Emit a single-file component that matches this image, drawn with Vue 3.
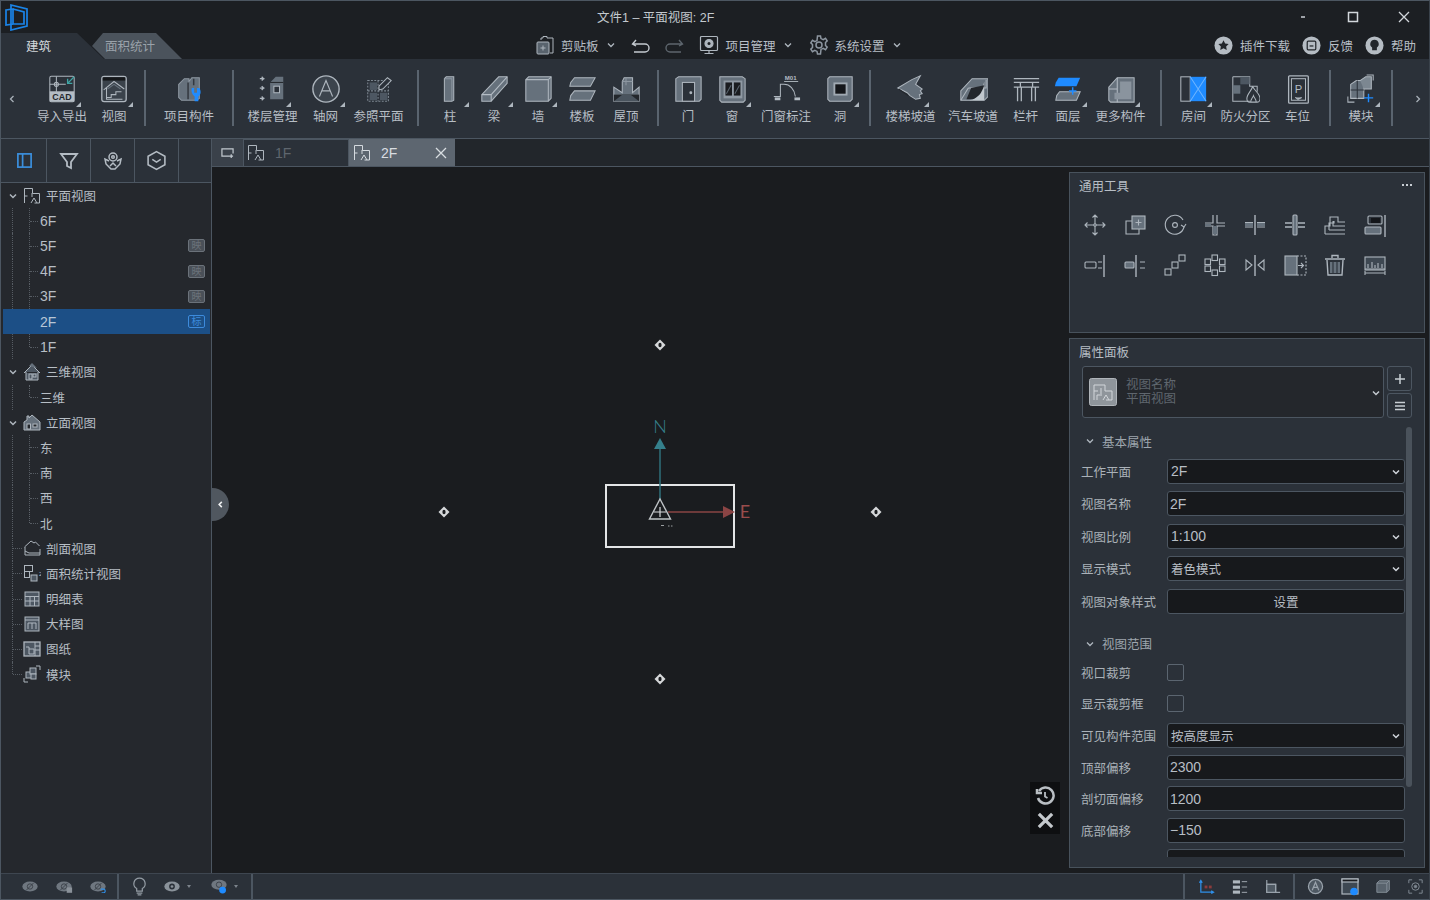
<script setup>
const T = 'font-family="Liberation Sans" stroke="none"'
const G = '#66717c'
const L = '#b4bcc4'
const B = '#1f8bff'

// ribbon icons, 32x32
const icons = {
  cad: `<rect x="3" y="2.5" width="26" height="27" rx="1.5"/><path d="M3 11h17M10 2.5V20"/><circle cx="10" cy="11" r="2.2"/><path d="M3 19h26" /><rect x="3" y="19" width="26" height="10.5" fill="${L}" stroke="none"/><text x="16" y="28" font-size="9.5" font-weight="700" fill="#23272c" text-anchor="middle" ${T}>CAD</text><path d="M29 3l-7 7M22 5v5h5" stroke="#3fa5a5" stroke-width="1.4"/>`,
  view: `<rect x="3" y="2.5" width="26" height="27" rx="2.5" stroke-width="1.4" fill="#3a424b"/><rect x="4" y="3.5" width="24" height="3.500" fill="#15171a" stroke="none"/><path d="M5 17l11-9 11 8M8 15v12h17" /><path d="M8 25h5v-3h5v-3h6" /><path d="M9 16l7-5 7 5" stroke="${G}"/>`,
  comp: `<path d="M5 11l6-6h5v3l3-4h8v22l-3 2H8l-3-3z" fill="${G}" stroke="#8d97a1"/><path d="M15 9v18M21 5v7" stroke="#33383f" stroke-width="1.600"/><path d="M19 15h2.500v5h3v-5H27c2 3 2 7-1 9v5h-4v-5c-3-2-4-6-3-9z" fill="${B}" stroke="none"/>`,
  floor: `<path d="M3 5h5M3 15h5M3 26h5M5 3l2 2-2 2M5 13l2 2-2 2M5 24l2 2-2 2" stroke-width="1.4"/><path d="M14 9l6-6h8v24H14z" fill="${G}" stroke="none"/><path d="M14 9h14" stroke="#23272c"/><rect x="18" y="13" width="6" height="7" fill="#2b3139"/>`,
  axis: `<circle cx="16" cy="16" r="14" stroke-width="1.5" fill="#3c444d"/><path d="M9 24l7-17 7 17M11.5 18h9" stroke-width="1.2"/>`,
  ref: `<rect x="4" y="7" width="22" height="22" stroke-dasharray="2 1.5" stroke="#7f8993"/><path d="M15 7v22M4 18h22" stroke-dasharray="2 1.5" stroke="#7f8993"/><rect x="6" y="9" width="8" height="8" fill="#4d5762" stroke="none"/><rect x="17" y="20" width="8" height="8" fill="#4d5762" stroke="none"/><rect x="6" y="20" width="8" height="8" fill="#4d5762" stroke="none"/><path d="M16 13l9-9 4 3-9 9-4 1z" fill="#2b3139"/>`,
  col: `<path d="M10 5l2-2h8v25l-2 1h-8z" fill="${G}"/><path d="M10 5h8v24" stroke="#8d97a1"/>`,
  beam: `<path d="M3 22L21 3h9v7L13 29H3z" fill="${G}"/><path d="M3 22h10l17-19M13 22v7" stroke="#b4bcc4"/>`,
  wall: `<path d="M3 6l3-3h24v23l-3 3H3z" fill="${G}"/><path d="M3 6h24v23M27 6l3-3" />`,
  slab: `<path d="M8 4h22l-5 9H3l1-4z" fill="${G}"/><path d="M8 18h22l-5 10H3l1-5z" fill="${G}"/>`,
  roof: `<path d="M3 14l9 6V8l2-4h9v16l7-6v15H3z" fill="${G}"/><path d="M3 22h27v7H3z" fill="#23272c" stroke="none"/><path d="M3 29l9-7h9l9 7z" fill="#4a545e" stroke="none"/><path d="M12 8h11M16 4v8" stroke="#8d97a1"/>`,
  door: `<path d="M3 29V5l3-2h24v24l-2 2H3z" fill="${G}"/><rect x="10" y="9" width="13" height="20" fill="#2b3139"/><circle cx="19" cy="20" r="1" fill="${L}"/>`,
  win: `<path d="M3 28V3h24l3 2v23l-2 2H5z" fill="${G}"/><rect x="7" y="7" width="20" height="19" fill="#8f99a3" stroke="none"/><rect x="9" y="9" width="7" height="14" fill="#1a1c20" stroke="none"/><rect x="18" y="9" width="7" height="14" fill="#1a1c20" stroke="none"/><path d="M10 21l5-9M19 21l5-9" stroke="#59636d"/>`,
  tag: `<text x="21" y="6" font-size="6.5" font-weight="700" fill="${L}" text-anchor="middle" ${T}>M01</text><path d="M14 8h15" stroke-width="1"/><path d="M3 24h7V11h4c6 0 11 5 12 13"/><rect x="4" y="25" width="6" height="3" fill="${L}" stroke="none"/><rect x="25" y="25" width="6" height="3" fill="${L}" stroke="none"/>`,
  hole: `<path d="M3 5l2-2h24v24l-2 2H5l-2-2z" fill="${G}"/><rect x="9" y="9" width="15" height="14" fill="#a0a9b2" stroke="none"/><rect x="11" y="11" width="11" height="10" fill="#14161a" stroke="none"/>`,
  stair: `<path d="M3 15l15-9 9-4-5 9 7 5-2 2 2 3-3 1 1 4-5 1-6-4-3-3z" fill="${G}"/><path d="M4 16l10 7" stroke="#23272c"/>`,
  ramp: `<path d="M3 18L15 5h17v19l-4 4H3z" fill="${G}"/><path d="M11 15h19v-9M3 28l8-13" /><path d="M12 28c8-2 13-6 16-20v20z" fill="#c2c9cf" stroke="none"/><path d="M14 15l-5 12h7c6-3 9-6 12-15" fill="#23272c" stroke="none"/>`,
  rail: `<path d="M3 5h27M3 9h27M3 14h27M7 14v15M26 14v15M11 14v15M22 14v15M10 9v5M23 9v5" stroke-width="1.4"/>`,
  surf: `<path d="M6 4h23l-4 9H2l1-4z" fill="${B}" stroke="none"/><path d="M7 19h22l-4 9H3l1-5z" fill="${G}"/><path d="M21 14v8M17 18h8" stroke="${B}" stroke-width="1.6"/>`,
  more: `<path d="M3 14L12 4h18v26H5l-2-2z" fill="${G}"/><path d="M12 4v12H3M12 16l0 14" stroke="#b4bcc4"/><path d="M15 8h12v19H9V20h6z" fill="#8a949e" stroke="none"/>`,
  room: `<rect x="3" y="3" width="10" height="26" /><rect x="13" y="3" width="17" height="26" fill="${B}" stroke="none"/><path d="M13 3l17 26M30 3L13 29" stroke="#6db4ff"/>`,
  fire: `<path d="M3 3h18v10h8v6M3 3v26h18"/><rect x="3" y="12" width="8" height="9" fill="${G}" stroke="none"/><rect x="11" y="3" width="10" height="8" fill="#4d5762" stroke="none"/><path d="M24 13c0 4-6 8-6 13 0 2 1 4 3 4h8c2 0 3-2 3-4 0-5-5-7-8-13zM22 30c0-3 2-4 3-7 1 3 3 4 3 7"/>`,
  park: `<rect x="6" y="2" width="21" height="29" rx="1" stroke-width="1.4"/><rect x="9" y="5" width="15" height="23"/><text x="16.5" y="20" font-size="12" fill="${L}" text-anchor="middle" ${T}>P</text><path d="M13 25l3 2 4-2" fill="${L}"/>`,
  mod: `<path d="M5 11l6-4h8v19H5z" fill="${G}"/><path d="M15 7l6-4h6v13h-8" fill="#7c8791"/><path d="M5 17h14M12 7v19" stroke="#2b3139"/><path d="M22 1h7v6M2 24v6h7"/><path d="M24 21v9M19 25.5h10" stroke="${B}" stroke-width="1.5"/>`,

  // tools, 24x24
  move: `<path d="M12 2v20M2 12h20M9.5 4.5L12 2l2.5 2.5M9.5 19.5L12 22l2.5-2.5M4.5 9.5L2 12l2.5 2.5M19.5 9.5L22 12l-2.5 2.5"/><circle cx="12" cy="12" r="1.2" fill="#2b3139"/>`,
  copy: `<rect x="9" y="3" width="13" height="13" fill="${G}"/><path d="M9 8H3v13h13v-5M15.5 6.5v6M12.5 9.5h6"/>`,
  rot: `<path d="M21 14A9.5 9.5 0 1 1 20 7"/><path d="M23 11l-2 3-3-2"/><circle cx="12" cy="12" r="2.4"/>`,
  trim: `<path d="M10 2v8H2M14 2v8h8M2 13h8v9h4v-9h8" stroke-width="1.2"/><rect x="10" y="13" width="4" height="8" fill="${G}" stroke="none"/><rect x="2" y="11" width="6" height="2" fill="${G}" stroke="none"/>`,
  split: `<path d="M12 2v20" stroke-width="1.4"/><path d="M2 9.500h8M2 14h8M14 9.500h8M14 14h8" /><rect x="2" y="10" width="8" height="3.500" fill="${G}" stroke="none"/><rect x="14" y="10" width="8" height="3.500" fill="${G}" stroke="none"/>`,
  ext: `<rect x="10" y="2" width="4" height="20" rx="1" fill="${G}"/><path d="M2 10h7M2 14h7M15 10h7M15 14h7" stroke-width="1.4"/>`,
  offs: `<path d="M2 21V13h5V4h8v5h7M2 21h20M6 17V10h5V8h0M10 8v5h12M6 17h16" stroke-width="1.1"/>`,
  align: `<path d="M22 2v22" stroke-width="1.4"/><rect x="5" y="3" width="14" height="8" rx="1"/><rect x="8" y="5" width="9" height="5" fill="#14161a" stroke="none"/><rect x="2" y="14" width="16" height="7" rx="1" fill="${G}"/>`,
  a1: `<path d="M21 2v22" stroke-width="1.4"/><rect x="2" y="9" width="11" height="6" rx="1"/><path d="M15 9h4M15 15h4"/>`,
  a2: `<path d="M13 2v22" stroke-width="1.4"/><rect x="2" y="9" width="9" height="6" rx="1" fill="${G}"/><path d="M17 9h5M17 15h5"/>`,
  arr: `<rect x="2" y="16" width="6" height="6"/><rect x="9" y="9" width="6" height="6"/><rect x="16" y="2" width="6" height="6"/>`,
  ring: `<rect x="9" y="2" width="5.5" height="5.5"/><rect x="2" y="6" width="5.5" height="5.5"/><rect x="16.5" y="6" width="5.5" height="5.5"/><rect x="2" y="13" width="5.5" height="5.5"/><rect x="16.5" y="13" width="5.5" height="5.5"/><rect x="9" y="17" width="5.5" height="5.5"/>`,
  mir: `<path d="M12 2v21" stroke-width="1.4"/><path d="M3 7l6 5-6 5zM21 7l-6 5 6 5z"/>`,
  mv2: `<rect x="2" y="3" width="12" height="19" fill="${G}"/><path d="M14 3h9v19h-9" stroke-dasharray="2 1.5"/><path d="M15 12.5h5M18 10l2.5 2.5L18 15" />`,
  del: `<path d="M2 6h20M9 5V2.500h6V5M4 7l1 15h14l1-15" stroke-width="1.4"/><rect x="7" y="9" width="10" height="11" fill="${G}" stroke="none"/><path d="M10 9v11M14 9v11" stroke="#2b3139"/>`,
  meas: `<rect x="2" y="4" width="20" height="13" fill="#3e4852"/><path d="M5 15v-4M9 15V9M12 15v-3M15 15v-5M19 15v-4M2 16h20"/><path d="M2 18v4M22 18v4M2 20h20"/>`,
}

// tree icons, 18x18
const tIcons = {
  plan: `<path d="M1.500 16V1.500h8v5h7V16h-5M1.500 9h3M9 6v4M8 16l3-5 3 5"/>`,
  home3: `<path d="M1 10l8-8 8 8M3 9v8h12V9" fill="#4d5762"/><path d="M6 3L9 0l5 5" fill="${G}" stroke="none"/><rect x="6" y="11" width="3" height="5"/><rect x="10" y="11" width="3" height="3"/>`,
  home: `<path d="M1 9l3-2V3h2v2l3-3 8 7v8H1z" fill="${G}"/><rect x="4" y="11" width="3.500" height="5" fill="#25282d"/><rect x="10" y="11" width="4" height="3" fill="#25282d"/>`,
  sect: `<path d="M1.500 8L8 2l3 2 1.500-1 4 4M2 8v8h15V10M2 12l4 2h11" />`,
  area: `<rect x="1.500" y="1.500" width="8" height="6"/><rect x="1.500" y="7.500" width="5" height="6"/><rect x="8" y="11" width="6" height="6" fill="#4d5762"/><text x="16" y="12" font-size="6" fill="${L}" ${T}>2</text>`,
  table: `<rect x="2" y="2" width="14" height="14" fill="#4d5762"/><path d="M2 6.500h14M2 11h14M7 6.500V16M11.500 6.500V16"/>`,
  det: `<rect x="2" y="2" width="14" height="14" fill="#4d5762"/><path d="M2 5h14M5 8v6M9 8v6M13 8v6M5 8h8"/>`,
  sheet: `<rect x="1" y="2" width="16" height="14" stroke-width="1.300" fill="#4d5762"/><path d="M12 2v14M12 6h5M12 10h5M3 7h3v7h5V9H6"/>`,
  mod: `<rect x="3" y="7" width="6" height="6" fill="#4d5762"/><rect x="7" y="3" width="6" height="6" fill="#4d5762"/><rect x="8" y="9" width="5" height="5" fill="#4d5762"/><path d="M13 1h4v4M1 13v4h4"/>`,
}

const groups = [
  { w: 107, gap: 12, pr: 17, items: [
    { t: '导入导出', i: 'cad', more: true }, { t: '视图', i: 'view', more: true }] },
  { w: 86, gap: 15, items: [{ t: '项目构件', i: 'comp' }] },
  { w: 183, gap: 13, items: [
    { t: '楼层管理', i: 'floor', more: true }, { t: '轴网', i: 'axis', more: true }, { t: '参照平面', i: 'ref' }] },
  { w: 238, gap: 14, items: [
    { t: '柱', i: 'col', more: true }, { t: '梁', i: 'beam', more: true }, { t: '墙', i: 'wall', more: true },
    { t: '楼板', i: 'slab' }, { t: '屋顶', i: 'roof' }] },
  { w: 210, gap: 14, items: [
    { t: '门', i: 'door' }, { t: '窗', i: 'win', more: true }, { t: '门窗标注', i: 'tag' }, { t: '洞', i: 'hole', more: true }] },
  { w: 289, gap: 12.5, items: [
    { t: '楼梯坡道', i: 'stair', more: true }, { t: '汽车坡道', i: 'ramp' }, { t: '栏杆', i: 'rail' },
    { t: '面层', i: 'surf', more: true }, { t: '更多构件', i: 'more', more: true }] },
  { w: 167, gap: 12, items: [
    { t: '房间', i: 'room', more: true }, { t: '防火分区', i: 'fire' }, { t: '车位', i: 'park' }] },
  { w: 60, gap: 0, items: [{ t: '模块', i: 'mod', more: true }] },
]

const tree = [
  { t: '平面视图', head: true, i: 'plan' },
  { t: '6F', c: 'mid', num: true },
  { t: '5F', c: 'mid', num: true, badge: '映' },
  { t: '4F', c: 'mid', num: true, badge: '映' },
  { t: '3F', c: 'mid', num: true, badge: '映' },
  { t: '2F', c: 'mid', num: true, badge: '标', sel: true },
  { t: '1F', c: 'end', num: true },
  { t: '三维视图', head: true, i: 'home3' },
  { t: '三维', c: 'end' },
  { t: '立面视图', head: true, i: 'home' },
  { t: '东', c: 'mid' },
  { t: '南', c: 'mid' },
  { t: '西', c: 'mid' },
  { t: '北', c: 'end' },
  { t: '剖面视图', i: 'sect', root: 'mid' },
  { t: '面积统计视图', i: 'area', root: 'mid' },
  { t: '明细表', i: 'table', root: 'mid' },
  { t: '大样图', i: 'det', root: 'mid' },
  { t: '图纸', i: 'sheet', root: 'mid' },
  { t: '模块', i: 'mod', root: 'end' },
]

const tools = ['move', 'copy', 'rot', 'trim', 'split', 'ext', 'offs', 'align', 'a1', 'a2', 'arr', 'ring', 'mir', 'mv2', 'del', 'meas']

const markers = [[660, 178], [444, 345], [876, 345], [660, 512]]

const basic = [
  { l: '工作平面', v: '2F', type: 'select', num: true },
  { l: '视图名称', v: '2F', type: 'input', num: true },
  { l: '视图比例', v: '1:100', type: 'select', num: true },
  { l: '显示模式', v: '着色模式', type: 'select' },
  { l: '视图对象样式', v: '设置', type: 'btn' },
]

const range = [
  { l: '视口裁剪', type: 'check' },
  { l: '显示裁剪框', type: 'check' },
  { l: '可见构件范围', v: '按高度显示', type: 'select' },
  { l: '顶部偏移', v: '2300', type: 'input', num: true },
  { l: '剖切面偏移', v: '1200', type: 'input', num: true },
  { l: '底部偏移', v: '−150', type: 'input', num: true },
  { l: '', v: '', type: 'input' },
]
</script>

<template>
  <div class="app">
    <header class="titlebar">
      <svg class="logo" viewBox="0 0 28 28" fill="none" stroke="#1a84e8" stroke-width="1.700">
        <path d="M7 2l16 4v17l-16 4z" />
        <path d="M2 7l7-1v15l-7 1zM9 6l11 3v12l-11 0" />
      </svg>
      <div class="doc-title">文件1 – 平面视图: 2F</div>
      <div class="win-btns">
        <span class="wb"><svg viewBox="0 0 12 12" width="12" height="12"><path d="M4 6h4" stroke="#c8ced4" stroke-width="1.500" /></svg></span>
        <span class="wb"><svg viewBox="0 0 12 12" width="12" height="12"><rect x="1.500" y="1.500" width="9" height="9" fill="none" stroke="#d2d7dc" stroke-width="1.500" /></svg></span>
        <span class="wb"><svg viewBox="0 0 12 12" width="12" height="12"><path d="M1 1l10 10M11 1L1 11" stroke="#d2d7dc" stroke-width="1.300" /></svg></span>
      </div>
    </header>

    <div class="menubar">
      <div class="ribbon-tabs">
        <div class="rt rt-active">建筑</div>
        <div class="rt rt-other">面积统计</div>
      </div>
      <div class="menu">
        <svg class="mi" viewBox="0 0 20 20" fill="none" stroke="#aeb6be"><path d="M6 5V3h2V1.500h4V3h6v15h-3" /><rect x="2" y="7" width="12" height="12" rx="1" fill="#59636d" /><path d="M8 10.500v5M5.500 13h5" /></svg>
        <span class="mt">剪贴板</span>
        <svg class="chev" viewBox="0 0 10 10" fill="none" stroke="#aeb6be" stroke-width="1.300"><path d="M2 3.500L5 6.500l3-3" /></svg>
        <svg class="undo" viewBox="0 0 20 20" fill="none" stroke="#c4cad0" stroke-width="1.400"><path d="M2 9h12a4 4 0 0 1 0 8H3M5 5L1.500 9 5 11" /></svg>
        <svg class="redo" viewBox="0 0 20 20" fill="none" stroke="#5d656d" stroke-width="1.400"><path d="M18 9H6a4 4 0 0 0 0 8h11M15 5l3.500 4L15 11" /></svg>
        <svg class="mi mon" viewBox="0 0 20 20" fill="none" stroke="#aeb6be" stroke-width="1.200"><rect x="1.500" y="1.500" width="17" height="14" rx="1" /><path d="M10 15.500v3M5.500 18.500h9" /><circle cx="10" cy="8.500" r="4" fill="#aeb6be" /><circle cx="10" cy="8.500" r="1.500" fill="#1c1f23" stroke="none" /></svg>
        <span class="mt mt-wide">项目管理</span>
        <svg class="chev" viewBox="0 0 10 10" fill="none" stroke="#aeb6be" stroke-width="1.300"><path d="M2 3.500L5 6.500l3-3" /></svg>
        <svg class="mi gear" viewBox="0 0 20 20" fill="none" stroke="#8d96a0" stroke-width="1.500"><path d="M8.500 1h3l.5 2.600 2.200 1 2.300-1.300 1.700 2.500-1.700 1.800v2.800l1.700 1.800-1.700 2.500-2.300-1.300-2.200 1L11.500 19h-3l-.5-2.600-2.200-1-2.300 1.300L1.800 14.200l1.700-1.800V9.600L1.800 7.800l1.700-2.500 2.300 1.300 2.200-1z" /><circle cx="10" cy="10" r="3" /></svg>
        <span class="mt">系统设置</span>
        <svg class="chev" viewBox="0 0 10 10" fill="none" stroke="#aeb6be" stroke-width="1.300"><path d="M2 3.500L5 6.500l3-3" /></svg>
      </div>
      <div class="menu-right">
        <svg class="mc" viewBox="0 0 20 20"><circle cx="10" cy="10" r="9.500" fill="#b5bcc3" /><path d="M10 4.500l1.700 3.300 3.700.6-2.600 2.600.6 3.700-3.400-1.700-3.400 1.700.6-3.700-2.600-2.600 3.700-.6z" fill="#22262b" /></svg>
        <span class="mt">插件下载</span>
        <svg class="mc" viewBox="0 0 20 20"><circle cx="10" cy="10" r="9.500" fill="#b5bcc3" /><rect x="5.500" y="5.500" width="9" height="9" rx="1" fill="none" stroke="#22262b" stroke-width="1.300" /><path d="M8 10.500h4" stroke="#22262b" stroke-width="1.300" /></svg>
        <span class="mt">反馈</span>
        <svg class="mc" viewBox="0 0 20 20"><circle cx="10" cy="10" r="9.500" fill="#b5bcc3" /><path d="M10 4a4.500 4.500 0 0 0-2.500 8.200V15h5v-2.800A4.500 4.500 0 0 0 10 4z" fill="#22262b" /></svg>
        <span class="mt">帮助</span>
      </div>
    </div>

    <div class="ribbon">
      <div class="scroll-l">
        <svg viewBox="0 0 8 10" width="8" height="10" fill="none" stroke="#a8b0b8" stroke-width="1.300"><path d="M5.500 2L2.500 5l3 3" /></svg>
      </div>
      <template v-for="g in groups" :key="g.items[0].t">
        <div class="rgroup" :style="{ width: g.w + 'px', gap: g.gap + 'px', justifyContent: g.pr ? 'flex-start' : 'center' }">
          <div v-for="it in g.items" :key="it.t" class="ritem">
            <div class="ricon">
              <svg viewBox="0 0 32 32" width="30" height="30" fill="none" stroke="#aeb6be" stroke-width="1.100" v-html="icons[it.i]"></svg>
              <i v-if="it.more" class="corner"></i>
            </div>
            <span class="rlabel">{{ it.t }}</span>
          </div>
        </div>
        <div class="rsep"></div>
      </template>
      <div class="scroll-r">
        <svg viewBox="0 0 8 10" width="8" height="10" fill="none" stroke="#a8b0b8" stroke-width="1.300"><path d="M2.500 2l3 3-3 3" /></svg>
      </div>
    </div>

    <div class="body">
      <aside class="left">
        <div class="ltabs">
          <div class="ltab">
            <svg viewBox="0 0 18 18" width="17" height="17" fill="none" stroke="#3b8fdc" stroke-width="1.800"><rect x="2" y="2" width="14" height="14" /><path d="M7 2v14" /></svg>
          </div>
          <div class="ltab">
            <svg viewBox="0 0 20 20" width="20" height="20" fill="none" stroke="#b4bcc4" stroke-width="1.800"><path d="M2 3h16l-6 8v6l-4-2v-4z" /></svg>
          </div>
          <div class="ltab">
            <svg viewBox="0 0 20 20" width="20" height="20" fill="none" stroke="#b4bcc4" stroke-width="1.500"><circle cx="10" cy="6" r="4" /><circle cx="10" cy="6" r="1.300" /><path d="M6 10L2 8l1 5 5 5h4l5-5 1-5-4 2M7 15l3-3 3 3" /></svg>
          </div>
          <div class="ltab">
            <svg viewBox="0 0 20 20" width="21" height="21" fill="none" stroke="#b4bcc4" stroke-width="1.500"><path d="M10 1.500l8 4.500v8l-8 4.500L2 14V6z" /><path d="M6 9l4 2.500L14 9" /></svg>
          </div>
          <div class="ltab ltab-last"></div>
        </div>
        <div class="tree">
          <div v-for="(r, idx) in tree" :key="idx" class="row" :class="{ sel: r.sel, child: r.c, numrow: r.num }">
            <template v-if="!r.sel">
              <i v-if="r.c" class="g-outer"></i>
              <i v-if="r.c" class="g-inner" :class="{ half: r.c === 'end' }"></i>
              <i v-if="r.c" class="g-tick"></i>
              <i v-if="r.root" class="g-outer root" :class="{ half: r.root === 'end' }"></i>
              <i v-if="r.root" class="g-tick root"></i>
            </template>
            <svg v-if="r.head" class="caret" viewBox="0 0 10 10" fill="none" stroke="#aeb6be" stroke-width="1.500"><path d="M2 3.500L5 6.500l3-3" /></svg>
            <svg v-if="r.i" class="ticon" viewBox="0 0 18 18" fill="none" stroke="#aeb6be" stroke-width="1" v-html="tIcons[r.i]"></svg>
            <span class="tname">{{ r.t }}</span>
            <span v-if="r.badge" class="badge">{{ r.badge }}</span>
          </div>
        </div>
      </aside>

      <main class="work">
        <div class="doctabs">
          <div class="dt-btn">
            <svg viewBox="0 0 16 14" width="15" height="13" fill="none" stroke="#c2c9cf" stroke-width="1.300"><path d="M10 11H2V3h12v5M12 9v4M10 11h4" /></svg>
          </div>
          <div class="dt">
            <svg class="dt-ic" viewBox="0 0 18 18" fill="none" stroke="#aeb6be" stroke-width="1"><path d="M1.500 16V1.500h8v5h7V16h-5M1.500 9h3M9 6v4M8 16l3-5 3 5" /></svg>
            <span class="dt-off">1F</span>
          </div>
          <div class="dt dt-on">
            <svg class="dt-ic" viewBox="0 0 18 18" fill="none" stroke="#d5dadf" stroke-width="1"><path d="M1.500 16V1.500h8v5h7V16h-5M1.500 9h3M9 6v4M8 16l3-5 3 5" /></svg>
            <span>2F</span>
            <svg class="dt-x" viewBox="0 0 12 12" fill="none" stroke="#d8dde1" stroke-width="1.300"><path d="M1 1l10 10M11 1L1 11" /></svg>
          </div>
        </div>

        <div class="stage">
          <div class="canvas">
            <svg class="drawing" width="858" height="706" viewBox="212 167 858 706">
              <rect x="606" y="485" width="128" height="62" fill="none" stroke="#e3e5e6" stroke-width="2" />
              <path d="M660 448V500" stroke="#2f6f7b" stroke-width="1.500" />
              <path d="M660 438l6 11h-12z" fill="#35808c" />
              <text x="660" y="433" font-size="18" font-weight="300" fill="#35808c" text-anchor="middle" font-family="Lato">N</text>
              <path d="M668 512h56" stroke="#8a4444" stroke-width="1.500" />
              <path d="M735 512l-12 6v-12z" fill="#8a4444" />
              <text x="745" y="518" font-size="18" fill="#9a4c4c" text-anchor="middle" font-family="Lato">E</text>
              <path d="M660 499l10.500 20h-21z" fill="#1a1c1f" stroke="#bfc3c6" stroke-width="1.400" />
              <path d="M660 507v10M654 512h12" stroke="#d8dadc" stroke-width="1.200" />
              <path d="M661 525.500h3M668 526h1.500M671 526h1.500" stroke="#9a9ea1" stroke-width="1" />
              <g v-for="m in markers" :key="m[0] + '-' + m[1]" :transform="`translate(${m[0]} ${m[1] + 167})`">
                <path d="M0-5.500L5.500 0 0 5.500-5.500 0z" fill="#d6d8da" />
                <ellipse rx="1.600" ry="2.300" fill="#1a1c1f" />
              </g>
            </svg>
            <div class="collapse">
              <svg viewBox="0 0 8 10" width="7" height="9" fill="none" stroke="#f0f2f3" stroke-width="1.800"><path d="M5.500 2L2.500 5l3 3" /></svg>
            </div>
            <div class="float-tools">
              <svg viewBox="0 0 20 20" width="20" height="20" fill="none" stroke="#b9bec3" stroke-width="2.500"><path d="M4 5a8 8 0 1 1-1 7" /><path d="M2 3v4h5" /><path d="M10 6v4.500l2.500 1.500" stroke-width="1.800" /></svg>
              <svg viewBox="0 0 20 20" width="19" height="19" fill="none" stroke="#c4c8cc" stroke-width="3.400"><path d="M3 3l14 14M17 3L3 17" /></svg>
            </div>
          </div>

          <div class="right">
            <section class="panel tools-panel">
              <div class="ptitle">
                <span>通用工具</span>
                <span class="dots"><i></i><i></i><i></i></span>
              </div>
              <div class="tool-grid">
                <svg v-for="t in tools" :key="t" viewBox="0 0 24 24" width="24" height="24" fill="none" stroke="#aeb6be" stroke-width="1.100" v-html="icons[t]"></svg>
              </div>
            </section>

            <section class="panel props-panel">
              <div class="ptitle ptitle-props">属性面板</div>
              <div class="view-pick">
                <div class="view-box">
                  <svg class="view-ic" viewBox="0 0 28 28" fill="none" stroke="#d2d6da" stroke-width="1"><rect x=".5" y=".5" width="27" height="27" rx="2" fill="#8f959b" stroke="#b0b5ba" /><path d="M5 22V7h11v6h7v9h-6M5 13h4M12 10v6M8 22v-5h5M14 22l3-5 3 5" /></svg>
                  <div class="view-txt"><div>视图名称</div><div>平面视图</div></div>
                  <svg class="sel-chev" viewBox="0 0 10 10" fill="none" stroke="#c4cad0" stroke-width="1.500"><path d="M2 3.500L5 6.500l3-3" /></svg>
                </div>
                <div class="view-btns">
                  <div class="vb"><svg viewBox="0 0 12 12" width="12" height="12" fill="none" stroke="#c8ced4" stroke-width="1.500"><path d="M6 1v10M1 6h10" /></svg></div>
                  <div class="vb"><svg viewBox="0 0 12 12" width="12" height="12" fill="none" stroke="#c8ced4" stroke-width="1.300"><path d="M1 2.500h10M1 6h10M1 9.500h10" /></svg></div>
                </div>
              </div>
              <div class="props-scroll">
                <div class="scrollbar"></div>
                <div class="sect">
                  <svg class="sect-chev" viewBox="0 0 10 10" fill="none" stroke="#aeb6be" stroke-width="1.300"><path d="M2 3.500L5 6.500l3-3" /></svg>
                  基本属性
                </div>
                <div v-for="p in basic" :key="p.l" class="prow prow-a">
                  <span class="plabel">{{ p.l }}</span>
                  <div class="ctl" :class="{ 'ctl-btn': p.type === 'btn', num: p.num, 'ctl-input': p.type === 'input' }">
                    {{ p.v }}
                    <svg v-if="p.type === 'select'" class="ctl-chev" viewBox="0 0 10 10" fill="none" stroke="#d0d5da" stroke-width="1.500"><path d="M2 3.500L5 6.500l3-3" /></svg>
                  </div>
                </div>
                <div class="sect sect-2">
                  <svg class="sect-chev" viewBox="0 0 10 10" fill="none" stroke="#aeb6be" stroke-width="1.300"><path d="M2 3.500L5 6.500l3-3" /></svg>
                  视图范围
                </div>
                <div v-for="(p, idx) in range" :key="idx" class="prow prow-b">
                  <span class="plabel">{{ p.l }}</span>
                  <div v-if="p.type === 'check'" class="check"></div>
                  <div v-else class="ctl" :class="{ num: p.num, 'ctl-input': p.type === 'input' }">
                    {{ p.v }}
                    <svg v-if="p.type === 'select'" class="ctl-chev" viewBox="0 0 10 10" fill="none" stroke="#d0d5da" stroke-width="1.500"><path d="M2 3.500L5 6.500l3-3" /></svg>
                  </div>
                </div>
              </div>
            </section>
          </div>
        </div>
      </main>
    </div>

    <footer class="status">
      <div class="st-group st-a">
        <svg v-for="n in 3" :key="n" viewBox="0 0 20 14" width="18" height="13"><ellipse cx="10" cy="7" rx="8.500" ry="5.500" fill="#6f7780" /><circle cx="10" cy="7" r="3" fill="none" stroke="#3a4047" /><path d="M6 11L14 3" stroke="#3a4047" />
          <rect v-if="n === 2" x="13" y="8" width="6" height="6" fill="#8a9199" />
          <path v-if="n === 3" d="M13 10h4a2.500 2.500 0 0 1 0 4h-3" fill="none" stroke="#2f8fe8" stroke-width="1.300" />
        </svg>
      </div>
      <div class="st-sep"></div>
      <div class="st-group st-b">
        <svg viewBox="0 0 16 20" width="15" height="19" fill="none" stroke="#949ca4" stroke-width="1.300"><path d="M8 1a6 6 0 0 0-3 11.200V15h6v-2.800A6 6 0 0 0 8 1zM5 17h6M6 19h4" /></svg>
        <span class="st-eye">
          <svg viewBox="0 0 20 14" width="18" height="13"><ellipse cx="10" cy="7" rx="8.500" ry="5.500" fill="#8a929a" /><circle cx="10" cy="7" r="3.200" fill="#2b3139" /><circle cx="10" cy="7" r="1.500" fill="#8a929a" /></svg>
          <i class="tri"></i>
        </span>
        <span class="st-eye st-eye2">
          <svg viewBox="0 0 20 16" width="18" height="15"><ellipse cx="10" cy="6" rx="8.500" ry="5.500" fill="#6f7780" /><circle cx="10" cy="6" r="3" fill="none" stroke="#3a4047" /><circle cx="14" cy="12" r="3.800" fill="#1f8bff" /></svg>
          <i class="tri"></i>
        </span>
      </div>
      <div class="st-sep"></div>
      <div class="st-right">
        <div class="st-sep"></div>
        <div class="st-icons st-i1">
          <svg viewBox="0 0 18 18" width="17" height="17" fill="none" stroke="#2f8fe8" stroke-width="1.300"><path d="M3 3v12h13M1.500 5L3 2.500 4.500 5M14 13.500l2.500 1.500-2.500 1.500" /><rect x="7" y="8" width="3" height="3" fill="#8c3c3c" stroke="none" /><rect x="11.500" y="8" width="3" height="3" fill="#8c3c3c" stroke="none" /></svg>
          <svg viewBox="0 0 18 18" width="16" height="16" fill="#aeb6be"><rect x="1" y="1.500" width="8" height="3.500" /><rect x="1" y="7.500" width="8" height="3.500" /><rect x="1" y="13" width="8" height="3.500" /><path d="M11 3h6M11 9h6M11 15h6" stroke="#aeb6be" fill="none" /></svg>
          <svg viewBox="0 0 18 18" width="16" height="16" fill="none" stroke="#9aa3ac" stroke-width="1.300"><path d="M2 1v14h15" /><rect x="2" y="6" width="10" height="9" fill="#4f5963" /><path d="M12 15V6H2" /></svg>
        </div>
        <div class="st-sep"></div>
        <div class="st-icons st-i2">
          <svg viewBox="0 0 18 18" width="17" height="17" fill="#4f5963" stroke="#9aa3ac" stroke-width="1.300"><circle cx="9" cy="9" r="7.500" /><path d="M5.500 13L9 4.500 12.500 13M7 10h4" fill="none" /></svg>
          <svg viewBox="0 0 18 18" width="18" height="18" fill="none" stroke="#aeb6be" stroke-width="1.200"><rect x="1" y="1" width="16" height="15" fill="#3e4852" /><rect x="1" y="1" width="16" height="3" fill="#1a1c20" /><circle cx="13" cy="13.500" r="3.800" fill="#1f8bff" stroke="none" /></svg>
          <svg viewBox="0 0 18 18" width="15" height="15" fill="#59636d" stroke="#8d96a0" stroke-width="1"><path d="M1 5l3-3h12v11l-3 3H1zM1 5h12v11M13 5l3-3" /></svg>
          <svg viewBox="0 0 18 18" width="15" height="15" fill="none" stroke="#7e8791" stroke-width="1.200"><path d="M1 5V1h4M13 1h4v4M17 13v4h-4M5 17H1v-4" /><circle cx="9" cy="9" r="4.500" /><circle cx="9" cy="9" r="1.500" fill="#7e8791" /></svg>
        </div>
      </div>
    </footer>
  </div>
</template>

<style>
html, body { margin: 0; background: #1a1c1f; }
</style>

<style scoped>
.app {
  width: 1430px;
  height: 900px;
  box-sizing: border-box;
  border: 1px solid #4c5661;
  border-right-color: #3a424b;
  display: flex;
  flex-direction: column;
  overflow: hidden;
  background: #1c1f23;
  color: #b7bec5;
  font-family: "Liberation Sans", "Noto Sans CJK SC", sans-serif;
  font-size: 12.5px;
}

.titlebar {
  height: 32px;
  display: flex;
  align-items: center;
  flex: none;
}
.logo { width: 28px; height: 28px; margin: 0 0 0 3px; }
.doc-title { margin-left: 565px; color: #c3c9ce; font-size: 12.5px; padding-bottom: 2px; }
.win-btns { margin-left: auto; display: flex; }
.wb { width: 50.5px; display: flex; justify-content: center; }

.menubar {
  height: 26px;
  display: flex;
  align-items: center;
  flex: none;
}
.ribbon-tabs { display: flex; height: 26px; width: 534px; flex: none; }
.rt { display: flex; align-items: center; justify-content: center; height: 100%; padding-bottom: 2px; }
.rt-active {
  width: 103px;
  background: #2b3139;
  color: #d3d8dc;
  padding-right: 28px;
  box-sizing: border-box;
  clip-path: polygon(0 0, 76px 0, 103px 100%, 0 100%);
}
.rt-other {
  width: 90px;
  margin-left: -12px;
  background: #4b535c;
  color: #9aa2aa;
  box-sizing: border-box;
  padding-right: 14px;
  clip-path: polygon(0 50%, 11px 0, 64px 0, 90px 100%, 13px 100%);
}
.menu { display: flex; align-items: center; padding-bottom: 2px; }
.mi { width: 20px; height: 20px; flex: none; }
.mt { color: #b7bec5; white-space: nowrap; }
.menu .mt { margin-left: 6px; }
.menu .mt-wide { margin-left: 7px; }
.chev { width: 10px; height: 10px; margin-left: 7px; flex: none; }
.undo { width: 20px; height: 20px; margin-left: 15px; }
.redo { width: 20px; height: 20px; margin-left: 13px; }
.mon { margin-left: 15px; }
.gear { margin-left: 16px; }
.menu-right { margin-left: auto; display: flex; align-items: center; padding-right: 13px; padding-bottom: 2px; }
.mc { width: 19px; height: 19px; margin-left: 12px; margin-right: 7px; flex: none; }
.menu-right .mt { margin-left: 0; }

.ribbon {
  height: 80px;
  flex: none;
  background: #2b3139;
  border-bottom: 1px solid #4c5661;
  box-sizing: border-box;
  display: flex;
  align-items: stretch;
  padding-top: 11px;
  padding-bottom: 11px;
}
.scroll-l { width: 36px; display: flex; align-items: center; padding-left: 7px; box-sizing: border-box; flex: none; }
.scroll-r { flex: 1; display: flex; align-items: center; justify-content: center; padding-left: 14px; }
.rgroup { display: flex; flex: none; }
.rsep { width: 2px; background: #5a646f; flex: none; height: 56px; }
.ritem { display: flex; flex-direction: column; align-items: center; min-width: 29px; }
.ricon { position: relative; width: 30px; height: 30px; margin-top: 4px; }
.corner {
  position: absolute;
  right: -4px;
  bottom: -3px;
  border-style: solid;
  border-width: 0 0 5px 5px;
  border-color: transparent transparent #aeb6be transparent;
}
.rlabel { margin-top: 4px; line-height: 18px; white-space: nowrap; color: #b7bec5; }

.body { flex: 1; display: flex; min-height: 0; }

.left {
  width: 211px;
  flex: none;
  background: #25282d;
  border-right: 1px solid #4c5661;
  box-sizing: border-box;
  display: flex;
  flex-direction: column;
}
.ltabs { height: 44px; display: flex; background: #2b3139; border-bottom: 1px solid #4c5661; box-sizing: border-box; flex: none; padding-left: 2px; }
.ltab { width: 44px; box-sizing: border-box; border-right: 1px solid #4c5661; display: flex; align-items: center; justify-content: center; }
.ltab-last { flex: 1; border-right: none; }
.tree { flex: 1; padding: 0 1px 0 2px; }
.row {
  position: relative;
  height: 25.2px;
  display: flex;
  align-items: center;
  color: #b7bec5;
}
.row.sel { background: #1c4f86; color: #b7c6d6; }
.row.child { padding-left: 37px; }
.row.numrow { font-size: 14px; }
.caret { position: absolute; left: 5px; top: 8px; width: 10px; height: 10px; }
.ticon { width: 18px; height: 18px; margin-left: 20px; margin-right: 5px; flex: none; }
.badge {
  margin-left: auto;
  margin-right: 5px;
  width: 17px;
  height: 13px;
  box-sizing: border-box;
  background: #4a5058;
  border: 1px solid #6b727a;
  border-radius: 2px;
  font-size: 10px;
  line-height: 11px;
  text-align: center;
  color: #6b727a;
}
.row.sel .badge { background: #1c4f86; border-color: #3d8bdc; color: #3d8bdc; }
.g-outer, .g-inner { position: absolute; top: 0; bottom: 0; border-left: 1px dotted #565c63; }
.g-outer { left: 9px; }
.g-inner { left: 26px; }
.g-inner.half { bottom: 50%; border-left-color: #5d636a; }
.g-outer.half { bottom: 50%; }
.g-tick { position: absolute; left: 27px; top: 50%; width: 8px; border-top: 1px dotted #565c63; }
.g-tick.root { left: 10px; width: 9px; }

.work { flex: 1; display: flex; flex-direction: column; min-width: 0; }
.doctabs {
  height: 28px;
  flex: none;
  display: flex;
  background: #22262b;
  border-bottom: 1px solid #4c5661;
  box-sizing: border-box;
}
.dt-btn { width: 31px; background: #3a414a; display: flex; align-items: center; justify-content: center; }
.dt {
  width: 106px;
  display: flex;
  align-items: center;
  gap: 10px;
  padding-left: 3px;
  box-sizing: border-box;
  background: #2b3139;
  border: 1px solid #4c5661;
  border-bottom: none;
  font-size: 14px;
  position: relative;
}
.dt-on { background: #5d6670; color: #d9dde1; border: none; padding-left: 4px; }
.dt-ic { width: 18px; height: 18px; flex: none; }
.dt-off { color: #5f666e; }
.dt-x { position: absolute; right: 8px; top: 8px; width: 12px; height: 12px; }

.stage { flex: 1; display: flex; min-height: 0; background: #1a1c1f; }
.canvas { flex: 1; position: relative; overflow: hidden; }
.drawing { position: absolute; left: 0; top: 0; }
.collapse {
  position: absolute;
  left: 0;
  top: 321px;
  width: 17px;
  height: 33px;
  background: #50575f;
  border-radius: 0 17px 17px 0;
  display: flex;
  align-items: center;
  justify-content: center;
}
.float-tools {
  position: absolute;
  left: 818px;
  top: 615px;
  width: 30px;
  height: 52px;
  background: #0e0f11;
  display: flex;
  flex-direction: column;
  align-items: center;
  justify-content: center;
  gap: 5px;
}

.right {
  width: 356px;
  flex: none;
  margin-right: 4px;
  padding: 5px 0;
  display: flex;
  flex-direction: column;
  gap: 5px;
}
.panel { background: #2b3139; border: 1px solid #48525c; box-sizing: border-box; }
.tools-panel { height: 161px; flex: none; }
.props-panel { flex: 1; min-height: 0; display: flex; flex-direction: column; }
.ptitle {
  height: 26px;
  box-sizing: border-box;
  display: flex;
  align-items: center;
  padding: 0 12px 2px 9px;
  justify-content: space-between;
  color: #b7bec5;
  flex: none;
}
.ptitle-props { height: 27px; }
.dots { display: flex; gap: 2px; }
.dots i { width: 2px; height: 2px; background: #c8ced4; }
.tool-grid {
  display: grid;
  grid-template-columns: repeat(8, 40px);
  grid-auto-rows: 40px;
  padding: 6px 0 0 5px;
  justify-items: center;
  align-items: center;
}
.view-pick { display: flex; padding-left: 12px; gap: 3px; flex: none; }
.view-box {
  width: 302px;
  height: 52px;
  box-sizing: border-box;
  background: #24272c;
  border: 1px solid #4c5661;
  border-radius: 3px;
  display: flex;
  align-items: center;
  padding-left: 6px;
  position: relative;
}
.view-ic { width: 28px; height: 28px; flex: none; }
.view-txt { margin-left: 9px; color: #5f666e; line-height: 14px; font-size: 12.5px; }
.sel-chev { position: absolute; right: 2px; top: 21px; width: 10px; height: 10px; }
.view-btns { display: flex; flex-direction: column; gap: 2px; }
.vb {
  width: 25px;
  height: 25px;
  box-sizing: border-box;
  border: 1px solid #4c5661;
  border-radius: 3px;
  display: flex;
  align-items: center;
  justify-content: center;
}

.props-scroll { position: relative; flex: 1; min-height: 0; overflow: hidden; margin-top: 9px; margin-bottom: 10px; padding-left: 11px; }
.scrollbar { position: absolute; left: 336px; top: 0; width: 6px; height: 360px; background: #4a525b; border-radius: 3px; }
.sect { height: 28px; display: flex; align-items: center; padding-left: 21px; color: #9ea6ae; position: relative; }
.sect-2 { margin-top: 12px; height: 27px; }
.sect-chev { position: absolute; left: 4px; top: 9px; width: 10px; height: 10px; }
.prow { display: flex; align-items: center; }
.prow-a { height: 32.5px; }
.prow-b { height: 31.6px; }
.plabel { width: 86px; flex: none; white-space: nowrap; color: #aab1b8; }
.ctl {
  width: 238px;
  height: 25px;
  box-sizing: border-box;
  background: #17191c;
  border: 1px solid #4c5661;
  border-radius: 3px;
  display: flex;
  align-items: center;
  padding-left: 3px;
  position: relative;
  color: #b7bec5;
  flex: none;
}
.ctl.num { font-size: 14px; }
.ctl-input { padding-left: 2px; }
.ctl-btn { justify-content: center; padding-left: 0; }
.ctl-chev { position: absolute; right: 3px; top: 7px; width: 10px; height: 10px; }
.check {
  width: 17px;
  height: 17px;
  box-sizing: border-box;
  border: 1px solid #5b6570;
  border-radius: 2px;
}

.status {
  height: 26px;
  flex: none;
  background: #2b3139;
  border-top: 1px solid #3e4650;
  box-sizing: border-box;
  display: flex;
  align-items: stretch;
}
.st-group { display: flex; align-items: center; }
.st-a { width: 116px; padding-left: 20px; gap: 16px; box-sizing: border-box; }
.st-sep { width: 2px; background: #4c5661; flex: none; }
.st-b { width: 132px; padding-left: 13px; box-sizing: border-box; gap: 16px; }
.st-eye { display: flex; align-items: center; gap: 6px; }
.st-eye2 { margin-left: 3px; }
.tri { border-style: solid; border-width: 3px 2.5px 0; border-color: #7c848c transparent transparent; }
.st-right { margin-left: auto; display: flex; align-items: stretch; }
.st-icons { display: flex; align-items: center; gap: 17px; box-sizing: border-box; }
.st-i1 { width: 108px; padding-left: 13px; }
.st-i2 { width: 134px; padding-left: 12px; }
</style>
